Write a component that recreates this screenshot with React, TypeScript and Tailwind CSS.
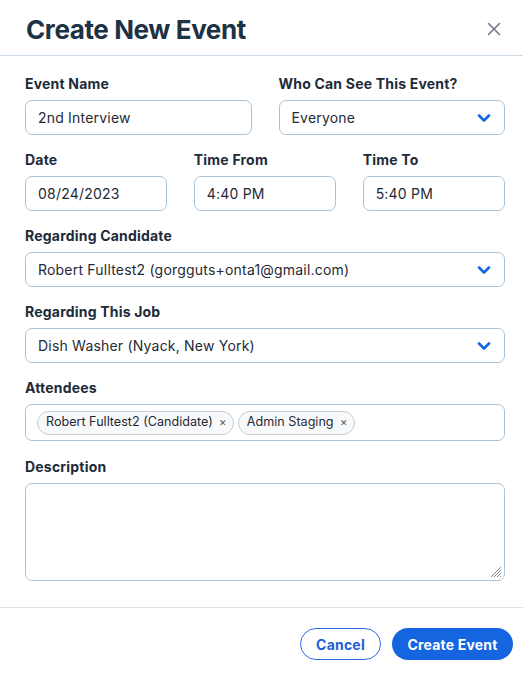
import React from "react";

const Chevron = () => (
  <svg width="14" height="9" viewBox="0 0 14 9" fill="none" className="absolute right-[13px] top-1/2 -translate-y-1/2">
    <path d="M2 2l5 5 5-5" stroke="#1565e0" strokeWidth="2.6" strokeLinecap="round" strokeLinejoin="round" />
  </svg>
);

const Label = ({ children }: { children: React.ReactNode }) => (
  <div className="text-[14px] leading-[17px] font-bold tracking-[0.2px] text-[#1d2b3a] mb-[8px]">{children}</div>
);

const inputCls =
  "h-[35px] w-full rounded-[7px] border border-[#aac3d8] bg-white px-[12px] flex items-center text-[14px] tracking-[0.2px] text-[#1f2a36]";

const Input = ({ value }: { value: string }) => <div className={inputCls}>{value}</div>;

const Select = ({ value }: { value: string }) => (
  <div className={inputCls + " relative"}>
    {value}
    <Chevron />
  </div>
);

const Chip = ({ text }: { text: string }) => (
  <div className="flex items-center h-[24px] rounded-full border border-[#c6ced6] bg-[#f8f9fa] pl-[8px] pr-[6px] text-[12.6px] text-[#1f2a36]">
    {text}
    <span className="ml-[6px] text-[9px] text-[#555]">✕</span>
  </div>
);

export default function App() {
  return (
    <div className="w-[523px] h-[675px] bg-white" style={{ fontFamily: "Inter, 'Noto Sans', sans-serif" }}>
      <div className="h-[56px] flex items-center justify-between pl-[26px] pr-[22px] border-b border-[#cbdae6]">
        <h1 className="text-[26px] font-bold text-[#1e3246] tracking-[-0.4px] mt-[4px]">Create New Event</h1>
        <svg width="14" height="14" viewBox="0 0 14 14" className="mt-[3px]">
          <path d="M1.5 1.5l11 11M12.5 1.5l-11 11" stroke="#707a84" strokeWidth="1.6" strokeLinecap="round" />
        </svg>
      </div>
      <div className="pl-[25px] pr-[18px] pt-[19px]">
        <div className="grid grid-cols-2 gap-x-[27px]">
          <div>
            <Label>Event Name</Label>
            <Input value="2nd Interview" />
          </div>
          <div>
            <Label>Who Can See This Event?</Label>
            <Select value="Everyone" />
          </div>
        </div>
        <div className="grid grid-cols-3 gap-x-[26.5px] mt-[16px]">
          <div>
            <Label>Date</Label>
            <Input value="08/24/2023" />
          </div>
          <div>
            <Label>Time From</Label>
            <Input value="4:40 PM" />
          </div>
          <div>
            <Label>Time To</Label>
            <Input value="5:40 PM" />
          </div>
        </div>
        <div className="mt-[16px]">
          <Label>Regarding Candidate</Label>
          <Select value="Robert Fulltest2 (gorgguts+onta1@gmail.com)" />
        </div>
        <div className="mt-[16px]">
          <Label>Regarding This Job</Label>
          <Select value="Dish Washer (Nyack, New York)" />
        </div>
        <div className="mt-[16px]">
          <Label>Attendees</Label>
          <div className="h-[37px] w-full rounded-[7px] border border-[#aac3d8] px-[11px] flex items-center gap-[4px]">
            <Chip text="Robert Fulltest2 (Candidate)" />
            <Chip text="Admin Staging" />
          </div>
        </div>
        <div className="mt-[17px]">
          <Label>Description</Label>
          <div className="relative h-[98px] w-full rounded-[7px] border border-[#aac3d8]">
            <svg width="12" height="12" viewBox="0 0 12 12" className="absolute right-[2px] bottom-[2px]">
              <path d="M11 1L1 11M11 4L4 11M11 7L7 11M11 10L10 11" stroke="#8a8a8a" strokeWidth="1" />
            </svg>
          </div>
        </div>
      </div>
      <div className="mt-[26px] border-t border-[#e2e2e2] flex justify-end gap-[11px] pr-[10px] pt-[20px]">
        <button className="h-[32px] w-[81px] rounded-full border border-[#2f6fe0] text-[14px] font-bold tracking-[0.2px] text-[#1d5fd8] bg-white">
          Cancel
        </button>
        <button className="h-[32px] w-[121px] rounded-full bg-[#1565e0] text-[14px] font-bold tracking-[0.2px] text-white">
          Create Event
        </button>
      </div>
    </div>
  );
}
